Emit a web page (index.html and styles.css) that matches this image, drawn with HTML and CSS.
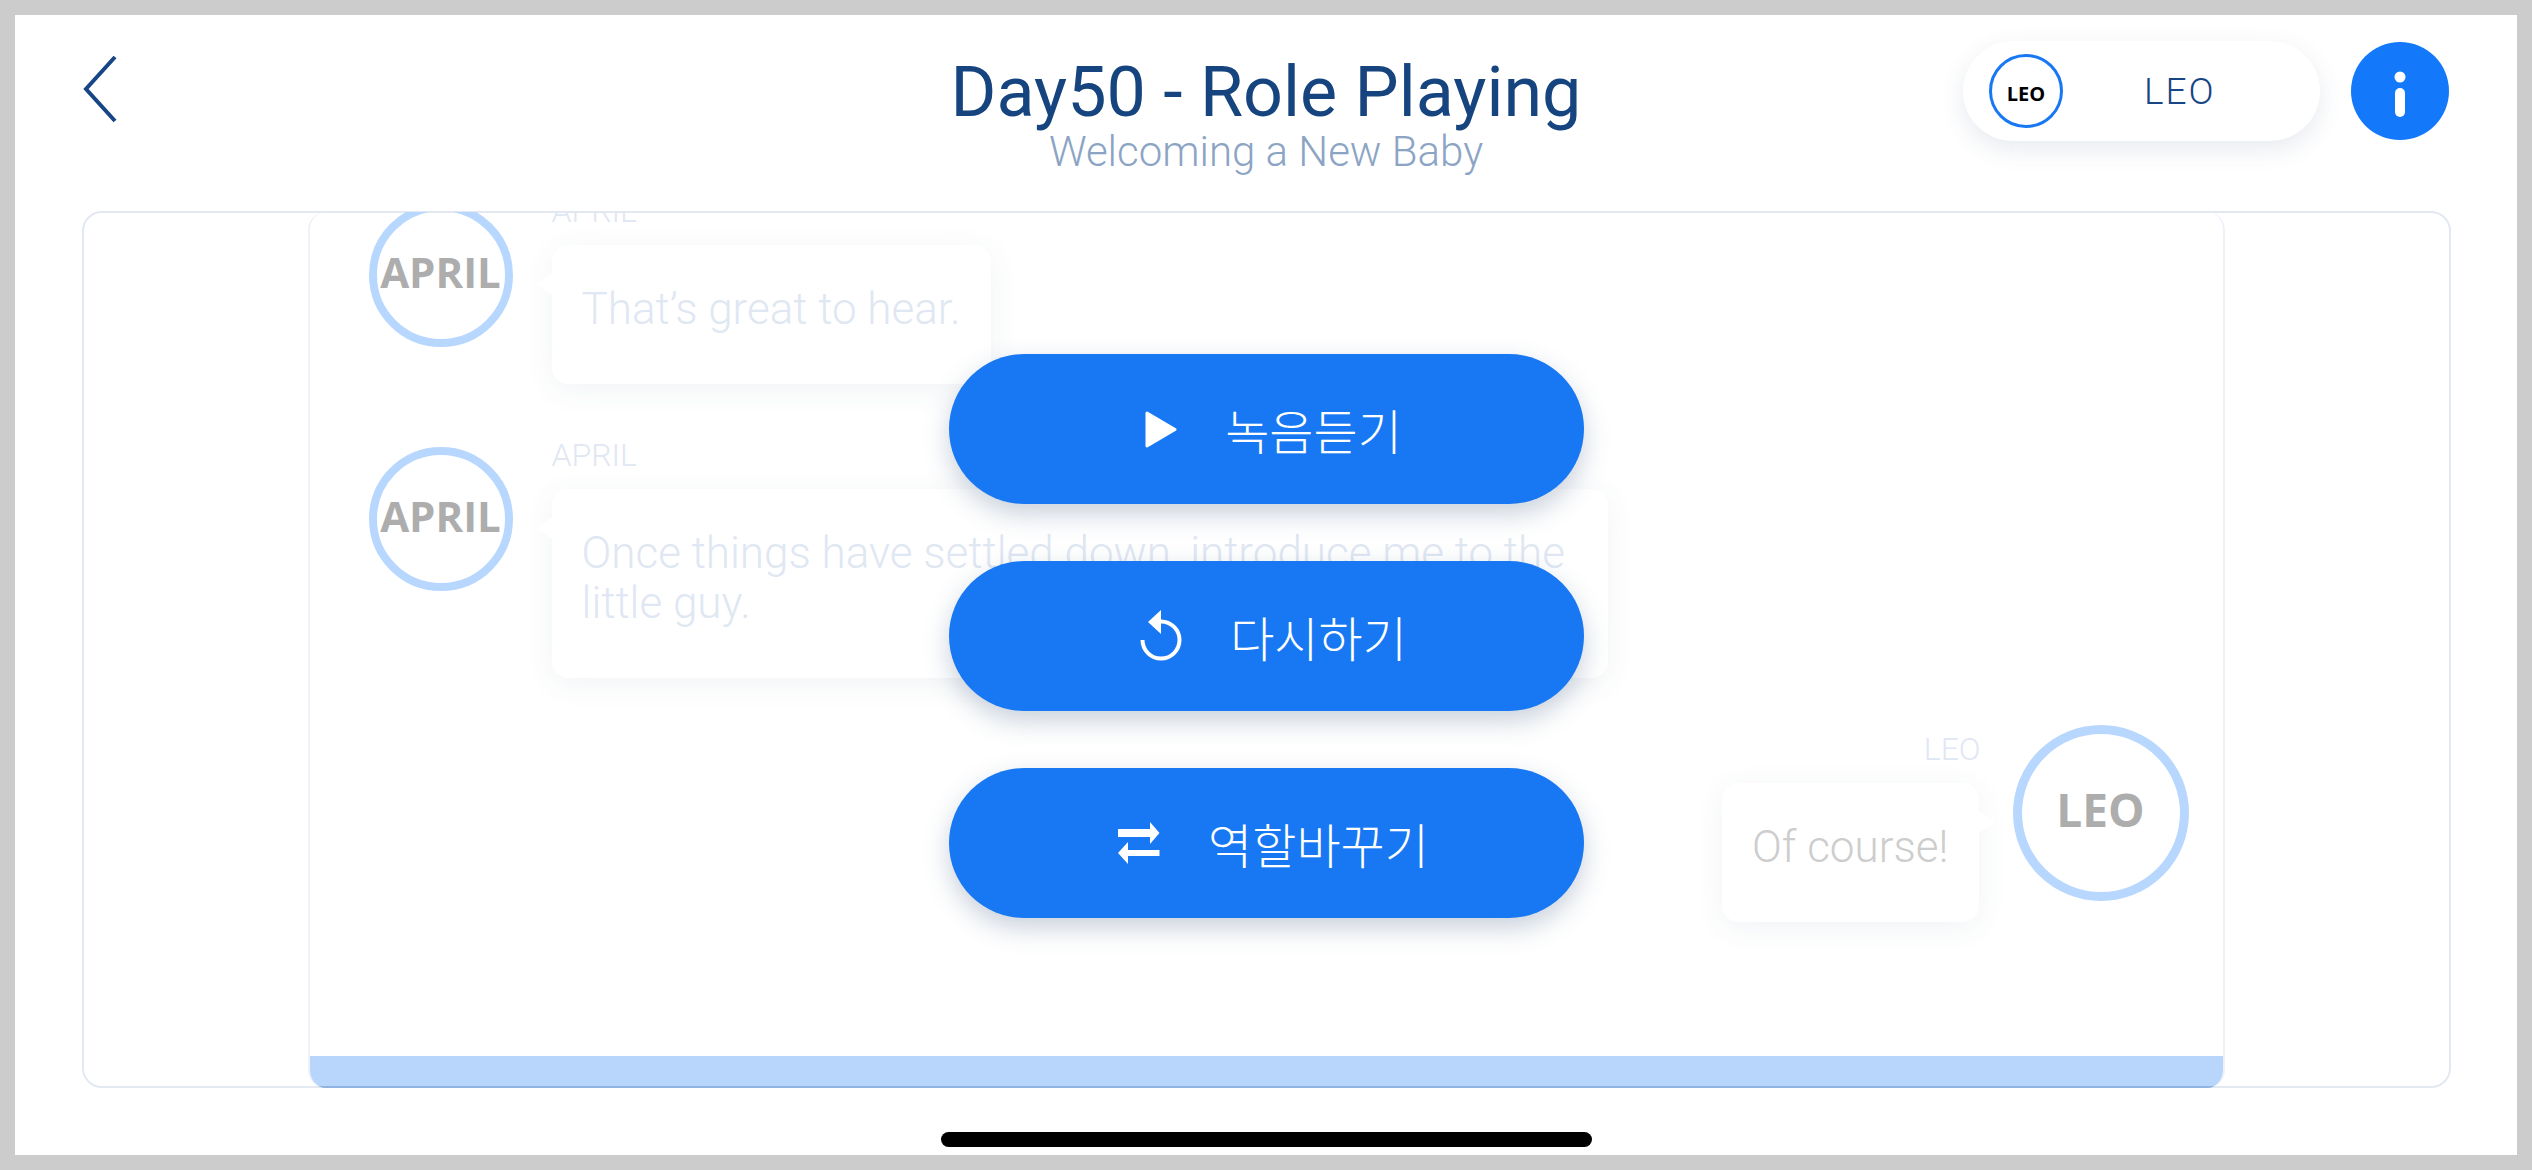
FILE: index.html
```html
<!DOCTYPE html>
<html lang="ko">
<head>
  <meta charset="UTF-8">
  <meta name="viewport" content="width=device-width, initial-scale=1.0">
  <title>Day50 - Role Playing</title>
  <link rel="stylesheet" href="styles.css">
</head>
<body>
  <div class="screen">

    <!-- Header -->
    <header class="top-bar">
      <a class="back-link">
        <svg width="34" height="68" viewBox="0 0 34 68"><polyline points="32,2 3,34 32,66" /></svg>
      </a>
      <div class="title-block">
        <h1>Day50 - Role Playing</h1>
        <p>Welcoming a New Baby</p>
      </div>
      <div class="top-actions">
        <div class="role-pill">
          <span class="role-badge">LEO</span>
          <span class="role-name">LEO</span>
        </div>
        <div class="info-button">
          <svg width="12" height="46" viewBox="0 0 12 46"><circle cx="6" cy="6" r="5.5" /><rect x="1" y="17" width="10" height="29" rx="5" /></svg>
        </div>
      </div>
    </header>

    <!-- Dialogue panel -->
    <main class="panel">
      <div class="chat">
        <div class="messages">
          <div class="msg">
            <div class="avatar">APRIL</div>
            <div class="msg-body">
              <div class="msg-name">APRIL</div>
              <div class="bubble">That’s great to hear.</div>
            </div>
          </div>
          <div class="msg">
            <div class="avatar">APRIL</div>
            <div class="msg-body">
              <div class="msg-name">APRIL</div>
              <div class="bubble bubble-wide">Once things have settled down, introduce me to the little guy.</div>
            </div>
          </div>
          <div class="msg msg-me">
            <div class="msg-body">
              <div class="msg-name">LEO</div>
              <div class="bubble">Of course!</div>
            </div>
            <div class="avatar">LEO</div>
          </div>
        </div>
        <div class="progress"></div>
      </div>

      <!-- Buttons over the dialogue -->
      <div class="actions">
        <button type="button">
          <svg width="32" height="37" viewBox="0 0 32 37"><polygon points="2,2 30,18.5 2,35" /></svg>
          <span>녹음듣기</span>
        </button>
        <button type="button">
          <svg width="42" height="52" viewBox="0 0 42 52"><path class="arc" d="M2.5 30 A18.5 18.5 0 1 0 21 11.5" /><polygon class="head" points="8,12 21,0 21,24" /></svg>
          <span>다시하기</span>
        </button>
        <button type="button">
          <svg width="42" height="42" viewBox="0 0 42 42"><path class="head" d="M0 7H32V0L41.5 11L32 22V15H0Z" /><path class="head" d="M41.5 28H10V20L0 31L10 42V34H41.5Z" /></svg>
          <span>역할바꾸기</span>
        </button>
      </div>
    </main>

    <div class="home-bar"></div>
  </div>
</body>
</html>
```

FILE: styles.css
```css
* {
  box-sizing: border-box;
}
body {
  margin: 0;
  width: 2532px;
  height: 1170px;
  padding: 15px;
  background-color: #cccccc;
  font-family: "Roboto", "Noto Sans CJK KR", sans-serif;
  overflow: hidden;
}
.screen {
  height: 1140px;
  background-color: #ffffff;
  display: flex;
  flex-direction: column;
  align-items: center;
}

/* Header */
.top-bar {
  width: 100%;
  height: 196px;
  padding: 26px 68px 0;
  display: grid;
  grid-template-columns: 1fr auto 1fr;
  align-items: start;
}
.back-link {
  display: block;
  padding-top: 14px;
}
.back-link polyline {
  fill: none;
  stroke: #174585;
  stroke-width: 4;
}
.title-block {
  text-align: center;
  padding-top: 10px;
}
.title-block h1 {
  margin: 0;
  font-size: 70px;
  line-height: 82px;
  font-weight: 400;
  color: #16447f;
}
.title-block p {
  margin: -6px 0 0;
  font-size: 42px;
  line-height: 50px;
  font-weight: 300;
  color: #8ca4c4;
}
.top-actions {
  display: flex;
  justify-content: flex-end;
  align-items: center;
  gap: 31px;
}
.role-pill {
  width: 357px;
  height: 100px;
  padding-left: 26px;
  border-radius: 50px;
  background-color: #ffffff;
  box-shadow: 0 8px 24px rgba(60, 80, 120, 0.12);
  display: flex;
  align-items: center;
}
.role-badge {
  width: 74px;
  height: 74px;
  border: 3px solid #1878f3;
  border-radius: 50%;
  padding-top: 5px;
  display: flex;
  align-items: center;
  justify-content: center;
  font-family: "Open Sans", sans-serif;
  font-size: 20px;
  font-weight: 700;
  color: #000000;
}
.role-name {
  margin-left: 81px;
  font-size: 37px;
  font-weight: 300;
  letter-spacing: 2px;
  color: #174585;
}
.info-button {
  width: 98px;
  height: 98px;
  border-radius: 50%;
  background-color: #1478fa;
  display: flex;
  align-items: center;
  justify-content: center;
}
.info-button svg {
  fill: #ffffff;
  margin-top: 6px;
}

/* Panel */
.panel {
  position: relative;
  width: 2369px;
  height: 877px;
  border: 2px solid #e3e8f1;
  border-radius: 20px;
  display: flex;
  justify-content: center;
}
.chat {
  width: 1917px;
  margin: -1px 0 -2px;
  border-radius: 18px;
  border: solid #eef1f8;
  border-width: 0 2px;
  display: flex;
  flex-direction: column;
  overflow: hidden;
}
.messages {
  flex: 1;
  min-height: 0;
  padding: 0 34px 0 59px;
  margin-top: -21px;
}
.msg {
  display: flex;
  align-items: flex-start;
  gap: 39px;
  margin-bottom: 51px;
}
.avatar {
  flex: none;
  width: 144px;
  height: 144px;
  margin-top: 12px;
  border: 8px solid #b8d7ff;
  border-radius: 50%;
  padding-bottom: 8px;
  display: flex;
  align-items: center;
  justify-content: center;
  font-family: "Open Sans", sans-serif;
  font-size: 42px;
  font-weight: 700;
  color: #adadad;
}
.msg-name {
  height: 54px;
  font-size: 32px;
  line-height: 40px;
  font-weight: 300;
  color: #dfe7f3;
}
.bubble {
  position: relative;
  width: fit-content;
  padding: 39px 30px 50px;
  border-radius: 16px;
  background-color: #ffffff;
  box-shadow: 0 6px 30px rgba(60, 80, 120, 0.07);
  font-size: 44px;
  line-height: 50px;
  font-weight: 300;
  color: #dfe7f3;
}
.bubble::before {
  content: "";
  position: absolute;
  left: -16px;
  top: 28px;
  border: solid transparent;
  border-width: 11px 16px 11px 0;
  border-right-color: #ffffff;
}
.bubble-wide {
  width: 1056px;
}
.msg-me {
  justify-content: flex-end;
  gap: 34px;
}
.msg-me .avatar {
  width: 176px;
  height: 176px;
  margin-top: -4px;
  border-width: 9px;
  font-size: 46px;
}
.msg-me .msg-name {
  text-align: right;
  margin-right: -2px;
}
.msg-me .bubble {
  color: #cdcdcd;
}
.msg-me .bubble::before {
  left: auto;
  right: -16px;
  border-width: 11px 0 11px 16px;
  border-right-color: transparent;
  border-left-color: #ffffff;
}
.progress {
  flex: none;
  height: 32px;
  background-color: #b8d5fb;
  border-bottom: 2px solid #8fb3e0;
}

/* Buttons over the dialogue */
.actions {
  position: absolute;
  inset: 141px 0 auto 0;
  display: flex;
  flex-direction: column;
  align-items: center;
  gap: 57px;
}
.actions button {
  width: 635px;
  height: 150px;
  padding: 0 0 0 15px;
  border: none;
  border-radius: 75px;
  background-color: #1878f3;
  box-shadow: 0 10px 26px rgba(60, 90, 130, 0.28);
  display: flex;
  align-items: center;
  justify-content: center;
  gap: 48px;
  font-family: "Noto Sans CJK KR", sans-serif;
  font-size: 48px;
  font-weight: 300;
  color: #ffffff;
}
.actions polygon, .actions .head {
  fill: #ffffff;
}
.actions svg > polygon:only-child {
  stroke: #ffffff;
  stroke-width: 3;
  stroke-linejoin: round;
}
.actions .arc {
  fill: none;
  stroke: #ffffff;
  stroke-width: 4;
}

.home-bar {
  width: 651px;
  height: 15px;
  margin-top: 44px;
  border-radius: 8px;
  background-color: #000000;
}
```
